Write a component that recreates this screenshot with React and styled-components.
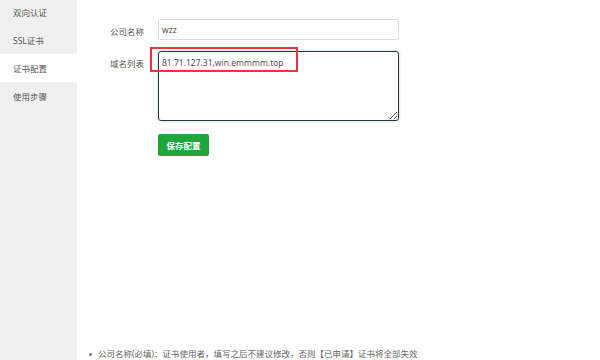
import React, { useState } from "react";
import styled, { createGlobalStyle } from "styled-components";

const GlobalStyle = createGlobalStyle`
  html, body {
    margin: 0;
    padding: 0;
    background: #fff;
    font-family: "Noto Sans", "Noto Sans CJK SC", sans-serif;
  }
`;

const menu = ["双向认证", "SSL证书", "证书配置", "使用步骤"];

const App = () => {
  const [active, setActive] = useState(2);
  const [company, setCompany] = useState("wzz");
  const [domains, setDomains] = useState("81.71.127.31,win.emmmm.top");

  return (
    <>
      <GlobalStyle />
      <Page>
        <Sidebar>
          {menu.map((item, i) => (
            <MenuItem key={item} active={i === active} onClick={() => setActive(i)}>
              {item}
            </MenuItem>
          ))}
        </Sidebar>
        <Main>
          <Form>
            <Label>公司名称</Label>
            <TextInput value={company} onChange={(e) => setCompany(e.target.value)} />
            <Label>域名列表</Label>
            <AreaWrap>
              <TextArea value={domains} onChange={(e) => setDomains(e.target.value)} />
              <Highlight />
            </AreaWrap>
            <span />
            <div>
              <SaveButton>保存配置</SaveButton>
            </div>
          </Form>
          <Notes>
            <Note>公司名称(必填)：证书使用者，填写之后不建议修改，否则【已申请】证书将全部失效</Note>
          </Notes>
        </Main>
      </Page>
    </>
  );
};

export default App;

const Page = styled.div`
  display: flex;
  width: 600px;
  height: 360px;
  overflow: hidden;
`;

const Sidebar = styled.div`
  width: 77px;
  flex-shrink: 0;
  background-color: #f0f0f0;
  margin-top: -2px;
`;

const MenuItem = styled.div`
  height: 28px;
  line-height: 29px;
  padding-left: 13px;
  font-size: 8.5px;
  color: #555;
  cursor: pointer;
  background-color: ${(props) => (props.active ? "#fff" : "transparent")};
`;

const Main = styled.div`
  flex: 1;
  padding-top: 19px;
  display: flex;
  flex-direction: column;
`;

const Form = styled.div`
  display: grid;
  grid-template-columns: 67px 241px;
  column-gap: 14px;
  row-gap: 11px;
  align-items: start;
`;

const Label = styled.label`
  text-align: right;
  font-size: 8.5px;
  color: #555;
  line-height: 16px;
  padding-top: 5px;
`;

const TextInput = styled.input`
  box-sizing: border-box;
  width: 241px;
  height: 21px;
  border: 1px solid #dcdcdc;
  border-radius: 2px;
  padding: 0 3px;
  font-family: "Noto Sans", sans-serif;
  font-size: 8.5px;
  color: #555;
  outline: none;
`;

const AreaWrap = styled.div`
  position: relative;
  height: 70px;
`;

const TextArea = styled.textarea`
  box-sizing: border-box;
  display: block;
  width: 241px;
  height: 70px;
  border: 1px solid #333;
  border-radius: 3px;
  padding: 4px 3px;
  font-family: "Noto Sans", sans-serif;
  font-size: 8.5px;
  line-height: 13px;
  color: #555;
  outline: none;
  box-shadow: 0 0 3px rgba(102, 175, 233, 0.6);
`;

const Highlight = styled.div`
  position: absolute;
  left: -8px;
  top: -4px;
  width: 148px;
  height: 25px;
  box-sizing: border-box;
  border: 2px solid #e8373d;
  pointer-events: none;
`;

const SaveButton = styled.button`
  margin-top: 2px;
  width: 51px;
  height: 22px;
  border: none;
  border-radius: 2px;
  background-color: #20a53a;
  color: #fff;
  font-family: "Noto Sans CJK SC", sans-serif;
  font-size: 8.5px;
  font-weight: bold;
  padding: 0;
  cursor: pointer;
`;

const Notes = styled.ul`
  list-style: none;
  margin: 192px 0 0 0;
  padding: 0 0 0 21px;
`;

const Note = styled.li`
  position: relative;
  font-size: 8.5px;
  line-height: 12px;
  color: #666;
  white-space: nowrap;

  &::before {
    content: "";
    position: absolute;
    left: -9px;
    top: 5px;
    width: 3px;
    height: 3px;
    border-radius: 50%;
    background: #777;
  }
`;
